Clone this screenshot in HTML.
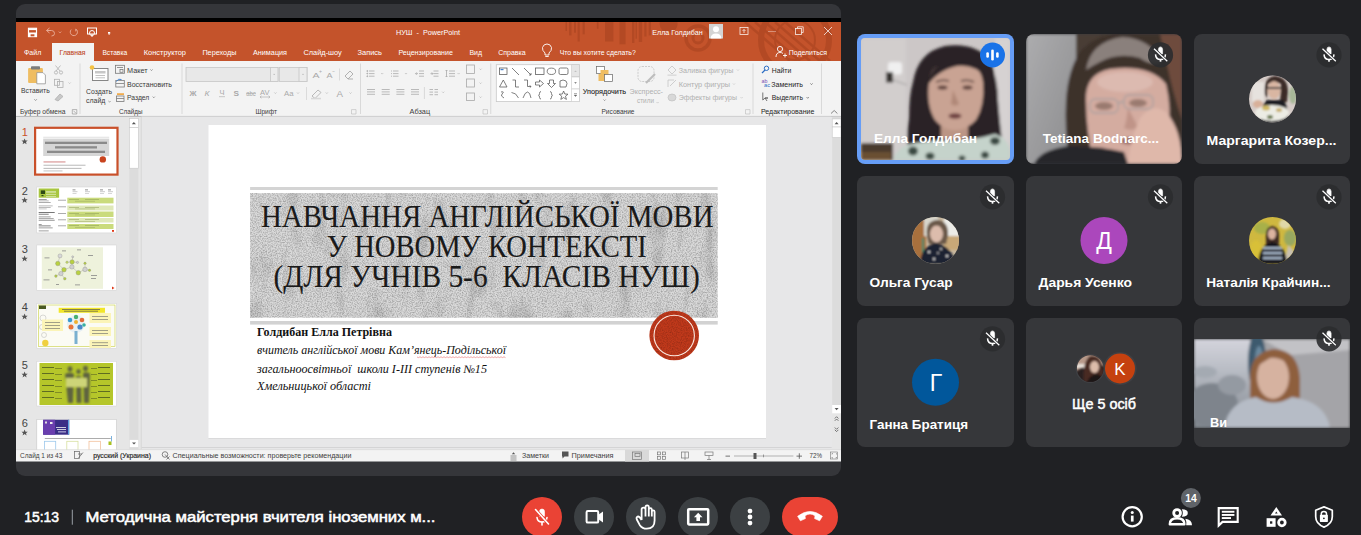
<!DOCTYPE html>
<html><head><meta charset="utf-8"><title>Meet</title>
<style>html,body{margin:0;padding:0;width:1361px;height:535px;overflow:hidden;background:#202124;font-family:"Liberation Sans",sans-serif}svg{display:block}</style></head><body>
<svg width="1361" height="535" viewBox="0 0 1361 535">
<defs><clipPath id="shc"><rect x="16" y="4" width="825" height="472" rx="9"/></clipPath><filter id="noise2" x="0" y="0" width="100%" height="100%"><feTurbulence type="fractalNoise" baseFrequency="0.06 0.02" numOctaves="3" seed="7"/><feColorMatrix type="matrix" values="0 0 0 0 0  0 0 0 0 0  0 0 0 0 0  0 0 0 -2.2 1.05"/><feComposite in2="SourceAlpha" operator="in"/></filter><clipPath id="tbc"><rect x="16" y="22" width="825" height="39"/></clipPath><clipPath id="slc"><rect x="208.5" y="125" width="557.5" height="313"/></clipPath><filter id="noise" x="0" y="0" width="100%" height="100%"><feTurbulence type="fractalNoise" baseFrequency="0.8" numOctaves="2" seed="3"/><feColorMatrix type="matrix" values="0 0 0 0 0  0 0 0 0 0  0 0 0 0 0  0 0 0 -1.6 1.0"/><feComposite in2="SourceAlpha" operator="in"/></filter></defs>
<g clip-path="url(#shc)">
<rect x="16" y="4" width="825" height="472" fill="#35363a" rx="0" />
<rect x="16" y="18" width="825" height="4" fill="#000" rx="0" />
<rect x="16" y="22" width="825" height="39" fill="#c4532b" rx="0" />
<g opacity="0.28" fill="#8a3414" clip-path="url(#tbc)">
<rect x="565.5" y="22" width="1.5" height="9"/>
<rect x="569" y="22" width="2.5" height="13.399999999999999"/>
<rect x="574" y="22" width="2" height="10.700000000000003"/>
<rect x="577.6" y="22" width="2.199999999999932" height="19.5"/>
<rect x="582.6" y="22" width="2.199999999999932" height="12.299999999999997"/>
<rect x="596.9" y="22" width="1.6000000000000227" height="6.800000000000001"/>
<rect x="605" y="22" width="8.399999999999977" height="19.5"/>
<rect x="619.5" y="22" width="6.100000000000023" height="22.299999999999997"/>
<rect x="632" y="22" width="2.3999999999999773" height="21"/>
<rect x="635.5" y="22" width="1.5" height="16.700000000000003"/>
<rect x="638.8" y="22" width="3.300000000000068" height="20"/>
<rect x="644.3" y="22" width="2.2000000000000455" height="14.5"/>
<rect x="648.7" y="22" width="2.2999999999999545" height="13.399999999999999"/>
<circle cx="668.6" cy="24" r="9"/>
<g fill="none" stroke="#8a3414"><circle cx="698" cy="38" r="5" stroke-width="3"/><circle cx="698" cy="38" r="12" stroke-width="3.5"/><circle cx="795" cy="40" r="34" stroke-width="6"/><circle cx="795" cy="40" r="20" stroke-width="2"/></g>
<line x1="745" y1="22" x2="790" y2="61" stroke="#8a3414" stroke-width="2.5"/>
<line x1="755" y1="22" x2="800" y2="61" stroke="#8a3414" stroke-width="2.5"/>
<line x1="765" y1="22" x2="810" y2="61" stroke="#8a3414" stroke-width="2.5"/>
<line x1="775" y1="22" x2="820" y2="61" stroke="#8a3414" stroke-width="2.5"/>
<line x1="785" y1="22" x2="830" y2="61" stroke="#8a3414" stroke-width="2.5"/>
</g>
<rect x="52" y="43" width="42" height="18" fill="#f3f3f3" rx="0" />
<g stroke="#fff" fill="none" stroke-width="1.1"><rect x="28.5" y="28.3" width="8" height="8.3" stroke-width="1.2"/><line x1="28.5" y1="33" x2="36.5" y2="33" stroke-width="1.2"/><rect x="29" y="28.5" width="7" height="1.6" fill="#fff" stroke="none"/><rect x="29" y="33" width="7" height="3.2" fill="#fff" stroke="none"/><rect x="30.6" y="34.3" width="3.8" height="2" fill="#c4532b" stroke="none"/></g>
<g stroke="#e8a993" fill="none" stroke-width="1"><path d="M46.5 30.5 L49.5 28 M46.5 30.5 L49.5 33 M46.5 30.5 H51.5 Q54.5 30.5 54.5 33.5 Q54.5 36 51.5 36"/><path d="M58.7 31.5 L60 33 L61.3 31.5" stroke-width="0.7"/><path d="M75.8 29 A3.6 3.6 0 1 1 71.2 29.6 M75.8 29 V31.4"/></g>
<g stroke="#fff" fill="none" stroke-width="1"><rect x="87.5" y="28" width="9" height="6"/><circle cx="92" cy="33" r="2.5"/><line x1="92" y1="34" x2="92" y2="37"/></g>
<rect x="108" y="32" width="2.2" height="1.5" fill="#fff" rx="0" />
<path d="M107.8 33.5 L110.4 33.5 L109.1 35 Z" fill="#fff"/>
<text xml:space="preserve" x="396" y="34.8" font-size="7.6" fill="#fff" font-weight="normal" font-style="normal" font-family="Liberation Sans" text-anchor="start" textLength="64" lengthAdjust="spacingAndGlyphs" >НУШ  -  PowerPoint</text>
<text xml:space="preserve" x="652.3" y="34.8" font-size="7.6" fill="#fff" font-weight="normal" font-style="normal" font-family="Liberation Sans" text-anchor="start" textLength="50.3" lengthAdjust="spacingAndGlyphs" >Елла Голдибан</text>
<rect x="709" y="24" width="14" height="14.5" fill="#d4d4d4" rx="0" />
<circle cx="716" cy="29.3" r="3" fill="#fff"/><path d="M710.5 38.5 Q711 33.5 716 33.5 Q721 33.5 721.5 38.5 Z" fill="#fff"/>
<g stroke="#fff" fill="none" stroke-width="0.8" opacity="0.9"><rect x="740" y="27.5" width="8" height="7"/><path d="M744 33 V29.5 M742.5 31 L744 29.5 L745.5 31"/><line x1="768" y1="31.5" x2="776" y2="31.5" opacity="0.5"/><rect x="795.5" y="28.5" width="6" height="6"/><path d="M797.5 28.5 V26.8 H803.2 V32.5 H801.5"/><path d="M824 27 L832 35 M832 27 L824 35"/></g>
<text xml:space="preserve" x="24" y="54.8" font-size="7.6" fill="#fff" font-weight="normal" font-style="normal" font-family="Liberation Sans" text-anchor="start" textLength="17.3" lengthAdjust="spacingAndGlyphs" >Файл</text>
<text xml:space="preserve" x="102.4" y="54.8" font-size="7.6" fill="#fff" font-weight="normal" font-style="normal" font-family="Liberation Sans" text-anchor="start" textLength="24.8" lengthAdjust="spacingAndGlyphs" >Вставка</text>
<text xml:space="preserve" x="143.8" y="54.8" font-size="7.6" fill="#fff" font-weight="normal" font-style="normal" font-family="Liberation Sans" text-anchor="start" textLength="42.2" lengthAdjust="spacingAndGlyphs" >Конструктор</text>
<text xml:space="preserve" x="202.4" y="54.8" font-size="7.6" fill="#fff" font-weight="normal" font-style="normal" font-family="Liberation Sans" text-anchor="start" textLength="34" lengthAdjust="spacingAndGlyphs" >Переходы</text>
<text xml:space="preserve" x="253" y="54.8" font-size="7.6" fill="#fff" font-weight="normal" font-style="normal" font-family="Liberation Sans" text-anchor="start" textLength="34" lengthAdjust="spacingAndGlyphs" >Анимация</text>
<text xml:space="preserve" x="303.4" y="54.8" font-size="7.6" fill="#fff" font-weight="normal" font-style="normal" font-family="Liberation Sans" text-anchor="start" textLength="38.4" lengthAdjust="spacingAndGlyphs" >Слайд-шоу</text>
<text xml:space="preserve" x="357.5" y="54.8" font-size="7.6" fill="#fff" font-weight="normal" font-style="normal" font-family="Liberation Sans" text-anchor="start" textLength="24.5" lengthAdjust="spacingAndGlyphs" >Запись</text>
<text xml:space="preserve" x="398.4" y="54.8" font-size="7.6" fill="#fff" font-weight="normal" font-style="normal" font-family="Liberation Sans" text-anchor="start" textLength="54.5" lengthAdjust="spacingAndGlyphs" >Рецензирование</text>
<text xml:space="preserve" x="469.4" y="54.8" font-size="7.6" fill="#fff" font-weight="normal" font-style="normal" font-family="Liberation Sans" text-anchor="start" textLength="12.6" lengthAdjust="spacingAndGlyphs" >Вид</text>
<text xml:space="preserve" x="498.2" y="54.8" font-size="7.6" fill="#fff" font-weight="normal" font-style="normal" font-family="Liberation Sans" text-anchor="start" textLength="27.5" lengthAdjust="spacingAndGlyphs" >Справка</text>
<text xml:space="preserve" x="559.7" y="54.8" font-size="7.6" fill="#fff" font-weight="normal" font-style="normal" font-family="Liberation Sans" text-anchor="start" textLength="76.1" lengthAdjust="spacingAndGlyphs" >Что вы хотите сделать?</text>
<text xml:space="preserve" x="788.7" y="54.8" font-size="7.6" fill="#fff" font-weight="normal" font-style="normal" font-family="Liberation Sans" text-anchor="start" textLength="38.3" lengthAdjust="spacingAndGlyphs" >Поделиться</text>
<text xml:space="preserve" x="59.6" y="54.8" font-size="7.6" fill="#c0461f" font-weight="normal" font-style="normal" font-family="Liberation Sans" text-anchor="start" textLength="25.8" lengthAdjust="spacingAndGlyphs" stroke="#c0461f" stroke-width="0.12">Главная</text>
<g stroke="#fff" fill="none" stroke-width="0.9"><path d="M545 53 Q542 50.5 542.5 47.5 Q543.5 44 547 44 Q550.5 44 551.5 47.5 Q552 50.5 549 53 V55 H545 Z"/><line x1="545.3" y1="56.5" x2="548.7" y2="56.5"/></g>
<g stroke="#fff" fill="none" stroke-width="0.9"><circle cx="780" cy="49" r="2.6"/><path d="M776 57 Q776 52.5 780 52.5 Q782 52.5 783 53.5 M783 55.5 H787 M785 53.5 V57.5"/></g>
<rect x="16" y="61" width="825" height="55" fill="#f3f3f3" rx="0" />
<rect x="16" y="115.5" width="825" height="1" fill="#e9e9e9" rx="0" />
<rect x="79.6" y="63.5" width="0.8" height="50.5" fill="#d2d2d2" rx="0" />
<rect x="181.6" y="63.5" width="0.8" height="50.5" fill="#d2d2d2" rx="0" />
<rect x="360" y="63.5" width="0.8" height="50.5" fill="#d2d2d2" rx="0" />
<rect x="490.4" y="63.5" width="0.8" height="50.5" fill="#d2d2d2" rx="0" />
<rect x="752.6" y="63.5" width="0.8" height="50.5" fill="#d2d2d2" rx="0" />
<rect x="821" y="63.5" width="0.8" height="50.5" fill="#d2d2d2" rx="0" />
<rect x="28.1" y="67.9" width="14.8" height="15.1" fill="#efbd62" rx="1" />
<rect x="31" y="66.2" width="9" height="3.3" fill="#7c7c7c" rx="0.8" />
<path d="M36.8 72.6 H43 L45.4 75 V83.8 H36.8 Z" fill="#fff" stroke="#8a8a8a" stroke-width="0.7"/>
<text xml:space="preserve" x="21" y="92.8" font-size="7.3" fill="#3b3b3b" font-weight="normal" font-style="normal" font-family="Liberation Sans" text-anchor="start" textLength="28.7" lengthAdjust="spacingAndGlyphs" >Вставить</text>
<path d="M34.3 99.2 L35.6 100.5 L36.9 99.2" stroke="#666" fill="none" stroke-width="0.6"/>
<g stroke="#b0b0b0" fill="none" stroke-width="0.8"><circle cx="56" cy="72.5" r="1.6"/><circle cx="61" cy="72.5" r="1.6"/><path d="M55.5 65.5 L60 71 M60.5 65.5 L56 71"/><rect x="54.5" y="79.3" width="5" height="6"/><rect x="57.5" y="81.5" width="5.5" height="6"/><path d="M55 99.5 L60 94 L63 96.5 L58 101 Z" fill="#c8c8c8"/><path d="M68.5 82.5 L69.6 83.6 L70.7 82.5" stroke-width="0.6"/></g>
<text xml:space="preserve" x="19.9" y="113.9" font-size="7.3" fill="#3b3b3b" font-weight="normal" font-style="normal" font-family="Liberation Sans" text-anchor="start" textLength="45.5" lengthAdjust="spacingAndGlyphs" >Буфер обмена</text>
<path d="M72.3 109.6 H76.8 V114 H72.3 Z M73.5 110.8 L76 113.3" stroke="#8a8a8a" fill="none" stroke-width="0.6"/>
<g><rect x="92.5" y="68.5" width="15.5" height="12" fill="#fff" stroke="#7a7a7a" stroke-width="0.9"/><rect x="95" y="71" width="10.5" height="2.5" fill="#c8c8c8"/><line x1="95.5" y1="75.5" x2="105" y2="75.5" stroke="#999" stroke-width="0.6"/><line x1="95.5" y1="77.8" x2="105" y2="77.8" stroke="#999" stroke-width="0.6"/><circle cx="92" cy="67.5" r="2.3" fill="#f5c242"/></g>
<text xml:space="preserve" x="86" y="93.5" font-size="7.3" fill="#3b3b3b" font-weight="normal" font-style="normal" font-family="Liberation Sans" text-anchor="start" textLength="26" lengthAdjust="spacingAndGlyphs" >Создать</text>
<text xml:space="preserve" x="86" y="103.3" font-size="7.3" fill="#3b3b3b" font-weight="normal" font-style="normal" font-family="Liberation Sans" text-anchor="start" textLength="19.4" lengthAdjust="spacingAndGlyphs" >слайд</text>
<path d="M108.4 101 L109.5 102.1 L110.6 101" stroke="#666" fill="none" stroke-width="0.6"/>
<g fill="none" stroke="#7a7a7a" stroke-width="0.8"><rect x="115.5" y="65.3" width="9" height="8"/><line x1="117" y1="67.5" x2="123" y2="67.5"/><rect x="120" y="69.5" width="3" height="2.8"/><rect x="115.8" y="80.5" width="8.5" height="6.5"/><line x1="116" y1="83.5" x2="124" y2="83.5"/><rect x="116.5" y="96" width="7.5" height="5.5"/><line x1="116.5" y1="98.5" x2="124" y2="98.5"/></g>
<path d="M116.5 81.5 Q118 78 121.5 79.5" stroke="#3f7fce" fill="none" stroke-width="1"/>
<rect x="117" y="93.3" width="7" height="1.6" fill="#f0a33a" rx="0" />
<text xml:space="preserve" x="127" y="72.6" font-size="7.3" fill="#3b3b3b" font-weight="normal" font-style="normal" font-family="Liberation Sans" text-anchor="start" textLength="20.6" lengthAdjust="spacingAndGlyphs" >Макет</text>
<text xml:space="preserve" x="127" y="86.6" font-size="7.3" fill="#3b3b3b" font-weight="normal" font-style="normal" font-family="Liberation Sans" text-anchor="start" textLength="45" lengthAdjust="spacingAndGlyphs" >Восстановить</text>
<text xml:space="preserve" x="127" y="99.8" font-size="7.3" fill="#3b3b3b" font-weight="normal" font-style="normal" font-family="Liberation Sans" text-anchor="start" textLength="22.3" lengthAdjust="spacingAndGlyphs" >Раздел</text>
<path d="M150.4 69.4 L151.5 70.6 L152.6 69.4" stroke="#666" fill="none" stroke-width="0.6"/>
<path d="M152.70000000000002 96.60000000000001 L153.8 97.8 L154.9 96.60000000000001" stroke="#666" fill="none" stroke-width="0.6"/>
<text xml:space="preserve" x="119" y="114.1" font-size="7.3" fill="#3b3b3b" font-weight="normal" font-style="normal" font-family="Liberation Sans" text-anchor="start" textLength="23.5" lengthAdjust="spacingAndGlyphs" >Слайды</text>
<rect x="186" y="67.5" width="92" height="14" fill="#e8e8e8" rx="0" stroke="#c6c6c6" stroke-width="0.8"/>
<rect x="270.5" y="67.5" width="7.5" height="14" fill="#ececec" rx="0" stroke="#c6c6c6" stroke-width="0.8"/>
<rect x="279.3" y="67.5" width="27.7" height="14" fill="#e8e8e8" rx="0" stroke="#c6c6c6" stroke-width="0.8"/>
<rect x="299" y="67.5" width="8" height="14" fill="#ececec" rx="0" stroke="#c6c6c6" stroke-width="0.8"/>
<path d="M273.5 74.4 H274.9" stroke="#999" stroke-width="0.6"/>
<path d="M302.3 74.4 H303.7" stroke="#999" stroke-width="0.6"/>
<text xml:space="preserve" x="312.5" y="78" font-size="8" fill="#a9a9a9" font-weight="normal" font-style="normal" font-family="Liberation Sans" text-anchor="start" textLength="7" lengthAdjust="spacingAndGlyphs" >A</text>
<text xml:space="preserve" x="319" y="72.5" font-size="4.5" fill="#a9a9a9" font-weight="normal" font-style="normal" font-family="Liberation Sans" text-anchor="start" textLength="3" lengthAdjust="spacingAndGlyphs" >+</text>
<text xml:space="preserve" x="326.5" y="78" font-size="6.8" fill="#a9a9a9" font-weight="normal" font-style="normal" font-family="Liberation Sans" text-anchor="start" textLength="6" lengthAdjust="spacingAndGlyphs" >A</text>
<text xml:space="preserve" x="332" y="72.5" font-size="4.5" fill="#a9a9a9" font-weight="normal" font-style="normal" font-family="Liberation Sans" text-anchor="start" textLength="3" lengthAdjust="spacingAndGlyphs" >-</text>
<rect x="339" y="68.5" width="0.7" height="12" fill="#d0d0d0" rx="0" />
<path d="M345 76 L350 71 L353 74 L348 79 Z M348 79 H353" stroke="#a9a9a9" fill="none" stroke-width="0.9"/>
<text xml:space="preserve" x="189.5" y="95.5" font-size="7.5" fill="#a9a9a9" font-weight="bold" font-style="normal" font-family="Liberation Sans" text-anchor="start" textLength="7" lengthAdjust="spacingAndGlyphs" >Ж</text>
<text xml:space="preserve" x="204.5" y="95.5" font-size="7.5" fill="#a9a9a9" font-weight="normal" font-style="italic" font-family="Liberation Sans" text-anchor="start" textLength="5" lengthAdjust="spacingAndGlyphs" >К</text>
<text xml:space="preserve" x="219.5" y="95.2" font-size="7.5" fill="#a9a9a9" font-weight="normal" font-style="normal" font-family="Liberation Sans" text-anchor="start" textLength="5" lengthAdjust="spacingAndGlyphs" >Ч</text>
<rect x="219" y="96.5" width="6" height="0.6" fill="#a9a9a9" rx="0" />
<text xml:space="preserve" x="233.5" y="96" font-size="8" fill="#a9a9a9" font-weight="bold" font-style="normal" font-family="Liberation Sans" text-anchor="start" textLength="5.5" lengthAdjust="spacingAndGlyphs" >S</text>
<text xml:space="preserve" x="246.2" y="95.5" font-size="6.5" fill="#a9a9a9" font-weight="normal" font-style="normal" font-family="Liberation Sans" text-anchor="start" textLength="9.5" lengthAdjust="spacingAndGlyphs" >abc</text>
<rect x="246" y="93" width="10" height="0.6" fill="#a9a9a9" rx="0" />
<text xml:space="preserve" x="260" y="94.5" font-size="6.5" fill="#a9a9a9" font-weight="normal" font-style="normal" font-family="Liberation Sans" text-anchor="start" textLength="9.5" lengthAdjust="spacingAndGlyphs" >AV</text>
<path d="M260 97 H270 M261.5 95.8 L260 97 L261.5 98.2 M268.5 95.8 L270 97 L268.5 98.2" stroke="#a9a9a9" fill="none" stroke-width="0.6"/>
<text xml:space="preserve" x="284" y="95.5" font-size="7.5" fill="#a9a9a9" font-weight="normal" font-style="normal" font-family="Liberation Sans" text-anchor="start" textLength="9.5" lengthAdjust="spacingAndGlyphs" >Aa</text>
<rect x="306.2" y="87" width="0.7" height="13" fill="#d0d0d0" rx="0" />
<path d="M312 96 L318 90 L321 92.5 L315 98.5 Z" stroke="#a9a9a9" fill="none" stroke-width="0.8"/>
<rect x="311" y="97.8" width="10" height="1.5" fill="#d8d8d8" rx="0" />
<text xml:space="preserve" x="336.5" y="96.5" font-size="8.5" fill="#a9a9a9" font-weight="normal" font-style="normal" font-family="Liberation Sans" text-anchor="start" textLength="6.5" lengthAdjust="spacingAndGlyphs" >A</text>
<path d="M274.4 92.5 L275.4 93.5 L276.4 92.5" stroke="#aaa" fill="none" stroke-width="0.6"/>
<path d="M297 92.5 L298 93.5 L299 92.5" stroke="#aaa" fill="none" stroke-width="0.6"/>
<path d="M325.8 92.5 L326.8 93.5 L327.8 92.5" stroke="#aaa" fill="none" stroke-width="0.6"/>
<path d="M349.5 92.5 L350.5 93.5 L351.5 92.5" stroke="#aaa" fill="none" stroke-width="0.6"/>
<text xml:space="preserve" x="255.5" y="113.9" font-size="7.3" fill="#3b3b3b" font-weight="normal" font-style="normal" font-family="Liberation Sans" text-anchor="start" textLength="21.5" lengthAdjust="spacingAndGlyphs" >Шрифт</text>
<path d="M351.5 109.6 H356 V114 H351.5 Z" stroke="#bbb" fill="none" stroke-width="0.6"/>
<g stroke="#a9a9a9" fill="none" stroke-width="0.8">
<line x1="369" y1="71.0" x2="374.5" y2="71.0"/>
<line x1="369" y1="73.6" x2="374.5" y2="73.6"/>
<line x1="369" y1="76.2" x2="374.5" y2="76.2"/>
<line x1="393" y1="71.0" x2="398.5" y2="71.0"/>
<line x1="393" y1="73.6" x2="398.5" y2="73.6"/>
<line x1="393" y1="76.2" x2="398.5" y2="76.2"/>
<circle cx="367.3" cy="71.0" r="0.5" fill="#a9a9a9"/>
<line x1="391" y1="71.0" x2="392" y2="71.0"/>
<circle cx="367.3" cy="73.6" r="0.5" fill="#a9a9a9"/>
<line x1="391" y1="73.6" x2="392" y2="73.6"/>
<circle cx="367.3" cy="76.2" r="0.5" fill="#a9a9a9"/>
<line x1="391" y1="76.2" x2="392" y2="76.2"/>
<line x1="419" y1="71.0" x2="424" y2="71.0"/>
<line x1="419" y1="73.6" x2="424" y2="73.6"/>
<line x1="419" y1="76.2" x2="424" y2="76.2"/>
<path d="M418 73.6 L415.5 73.6 M416.7 72.4 L415.5 73.6 L416.7 74.8"/>
<line x1="433.5" y1="71.0" x2="438.5" y2="71.0"/>
<line x1="433.5" y1="73.6" x2="438.5" y2="73.6"/>
<line x1="433.5" y1="76.2" x2="438.5" y2="76.2"/>
<path d="M430.5 73.6 L433 73.6 M431.8 72.4 L433 73.6 L431.8 74.8"/>
<line x1="449" y1="71.0" x2="455" y2="71.0"/>
<line x1="449" y1="73.6" x2="455" y2="73.6"/>
<line x1="449" y1="76.2" x2="455" y2="76.2"/>
<path d="M446.5 70 V77 M445.5 71 L446.5 70 L447.5 71 M445.5 76 L446.5 77 L447.5 76"/>
<path d="M381.2 73.1 L382.2 74.1 L383.2 73.1" stroke-width="0.6"/>
<path d="M405 73.1 L406 74.1 L407 73.1" stroke-width="0.6"/>
<path d="M457.6 73.1 L458.6 74.1 L459.6 73.1" stroke-width="0.6"/>
<path d="M442.2 91.7 L443.2 92.7 L444.2 91.7" stroke-width="0.6"/>
<path d="M479.6 68.7 L480.6 69.7 L481.6 68.7" stroke-width="0.6"/>
<path d="M479.6 82.6 L480.6 83.6 L481.6 82.6" stroke-width="0.6"/>
<path d="M479.6 96.6 L480.6 97.6 L481.6 96.6" stroke-width="0.6"/>
<line x1="367" y1="89.5" x2="375" y2="89.5"/>
<line x1="367" y1="91.9" x2="375" y2="91.9"/>
<line x1="367" y1="94.3" x2="375" y2="94.3"/>
<line x1="381.7" y1="89.5" x2="389.7" y2="89.5"/>
<line x1="381.7" y1="91.9" x2="389.7" y2="91.9"/>
<line x1="381.7" y1="94.3" x2="389.7" y2="94.3"/>
<line x1="396.4" y1="89.5" x2="404.4" y2="89.5"/>
<line x1="396.4" y1="91.9" x2="404.4" y2="91.9"/>
<line x1="396.4" y1="94.3" x2="404.4" y2="94.3"/>
<line x1="411" y1="89.5" x2="419" y2="89.5"/>
<line x1="411" y1="91.9" x2="419" y2="91.9"/>
<line x1="411" y1="94.3" x2="419" y2="94.3"/>
<line x1="424.4" y1="87" x2="424.4" y2="99" stroke="#d0d0d0"/>
<line x1="429.5" y1="89.5" x2="433.0" y2="89.5"/>
<line x1="429.5" y1="92.1" x2="433.0" y2="92.1"/>
<line x1="429.5" y1="94.7" x2="433.0" y2="94.7"/>
<line x1="434.5" y1="89.5" x2="438.0" y2="89.5"/>
<line x1="434.5" y1="92.1" x2="438.0" y2="92.1"/>
<line x1="434.5" y1="94.7" x2="438.0" y2="94.7"/>
<rect x="466.5" y="65" width="8" height="8.5"/><rect x="466.5" y="79" width="8" height="8"/><rect x="466.5" y="93" width="8" height="7.5"/>
</g>
<text xml:space="preserve" x="409.5" y="113.9" font-size="7.3" fill="#3b3b3b" font-weight="normal" font-style="normal" font-family="Liberation Sans" text-anchor="start" textLength="20.6" lengthAdjust="spacingAndGlyphs" >Абзац</text>
<path d="M483 109.6 H487.5 V114 H483 Z" stroke="#bbb" fill="none" stroke-width="0.6"/>
<rect x="496.3" y="64.7" width="83" height="36.9" fill="#fff" rx="0" stroke="#c8c8c8" stroke-width="0.8"/>
<rect x="571.7" y="64.7" width="7.6" height="12" fill="#e6e6e6" rx="0" stroke="#c8c8c8" stroke-width="0.6"/>
<rect x="571.7" y="77" width="7.6" height="12" fill="#fff" rx="0" stroke="#c8c8c8" stroke-width="0.6"/>
<rect x="571.7" y="89" width="7.6" height="12.6" fill="#fff" rx="0" stroke="#c8c8c8" stroke-width="0.6"/>
<path d="M574.2 72 L575.5 70.5 L576.8 72 Z" fill="#c0c0c0"/><path d="M574.2 82.3 L575.5 83.8 L576.8 82.3 Z" fill="#666"/><path d="M574 93.5 H577 M574.2 95 L575.5 96.5 L576.8 95 Z" stroke="#666" fill="#666" stroke-width="0.5"/>
<g stroke="#555" fill="none" stroke-width="0.75">
<rect x="499.5" y="68" width="7.5" height="6.5"/><rect x="500.5" y="69" width="3" height="1.2" fill="#3f7fce" stroke="none"/>
<line x1="512" y1="68" x2="519" y2="75"/><line x1="524" y1="68" x2="531" y2="75"/><path d="M529 75 H531 V73"/>
<rect x="535.5" y="68" width="8.5" height="6.5"/><ellipse cx="551.4" cy="71.3" rx="4.2" ry="3.2"/><rect x="559" y="68" width="9" height="6.5" rx="1.5"/>
<path d="M499.5 87 L503.3 80 L507 87 Z"/><path d="M512.5 80 H515.5 V87 H519"/><path d="M524 80 H527.5 V86.5 H531 M529.8 85.3 L531 86.5 L529.8 87.7"/>
<path d="M535.5 82 H539.5 V80 L543.5 83.5 L539.5 87 V85 H535.5 Z"/><path d="M549.5 80 H553.5 V83.5 H555.5 L551.5 87.5 L547.5 83.5 H549.5 Z"/><path d="M560 87 V81 Q563 79 566 81 Q568 83 566 87 Z"/>
<path d="M501 92 Q505 91 502 94 Q500 96 504 98"/><path d="M511.5 92.5 Q516 92.5 518.5 98"/><path d="M523 98 Q525 92 527.5 92 Q530 92 531 98"/>
<path d="M541 91.5 Q539.5 91.5 539.5 93.5 Q539.5 95.3 538.5 95.3 Q539.5 95.3 539.5 97.3 Q539.5 99 541 99"/><path d="M550 91.5 Q551.5 91.5 551.5 93.5 Q551.5 95.3 552.5 95.3 Q551.5 95.3 551.5 97.3 Q551.5 99 550 99"/>
<path d="M563.6 91 L564.8 94 L568 94.2 L565.5 96.2 L566.4 99.4 L563.6 97.6 L560.8 99.4 L561.7 96.2 L559.2 94.2 L562.4 94 Z"/>
</g>
<rect x="596.5" y="66.5" width="8" height="7" fill="#fff" rx="0" stroke="#666" stroke-width="0.7"/>
<rect x="600.5" y="70" width="8" height="7" fill="#efbd62" rx="0" />
<rect x="598.5" y="74" width="8" height="7" fill="#efbd62" rx="0" />
<rect x="604.5" y="74.5" width="8" height="7" fill="#fff" rx="0" stroke="#666" stroke-width="0.7"/>
<text xml:space="preserve" x="582.8" y="93.5" font-size="7.3" fill="#1e1e1e" font-weight="normal" font-style="normal" font-family="Liberation Sans" text-anchor="start" textLength="43.2" lengthAdjust="spacingAndGlyphs" stroke="#1e1e1e" stroke-width="0.1">Упорядочить</text>
<path d="M603.5 99.5 L604.6 100.6 L605.7 99.5" stroke="#666" fill="none" stroke-width="0.6"/>
<rect x="638" y="66.5" width="16" height="15" rx="4" stroke="#c8c8c8" fill="none" stroke-width="0.9" stroke-dasharray="2 1"/>
<path d="M646 83 L655 74" stroke="#bdbdbd" stroke-width="2.2"/>
<text xml:space="preserve" x="629.6" y="93.5" font-size="7.3" fill="#b0b0b0" font-weight="normal" font-style="normal" font-family="Liberation Sans" text-anchor="start" textLength="33.4" lengthAdjust="spacingAndGlyphs" >Экспресс-</text>
<text xml:space="preserve" x="637" y="103.3" font-size="7.3" fill="#b0b0b0" font-weight="normal" font-style="normal" font-family="Liberation Sans" text-anchor="start" textLength="17" lengthAdjust="spacingAndGlyphs" >стили</text>
<path d="M656.5 102 L657.6 103.1 L658.7 102" stroke="#bbb" fill="none" stroke-width="0.6"/>
<g stroke="#c4c4c4" fill="none" stroke-width="0.8"><path d="M668 70 L672 66 L676 70 L672 74 Z"/><rect x="667.5" y="74.5" width="9" height="1.3" fill="#d8d8d8" stroke="none"/><path d="M668 87 V80 H674 M670 86 L676 80"/><ellipse cx="672" cy="97.5" rx="4" ry="3.5" fill="#d8d8d8"/></g>
<text xml:space="preserve" x="678.7" y="72.6" font-size="7.3" fill="#b0b0b0" font-weight="normal" font-style="normal" font-family="Liberation Sans" text-anchor="start" textLength="54.6" lengthAdjust="spacingAndGlyphs" >Заливка фигуры</text>
<text xml:space="preserve" x="678.7" y="86.6" font-size="7.3" fill="#b0b0b0" font-weight="normal" font-style="normal" font-family="Liberation Sans" text-anchor="start" textLength="51.3" lengthAdjust="spacingAndGlyphs" >Контур фигуры</text>
<text xml:space="preserve" x="678.7" y="100.3" font-size="7.3" fill="#b0b0b0" font-weight="normal" font-style="normal" font-family="Liberation Sans" text-anchor="start" textLength="58.3" lengthAdjust="spacingAndGlyphs" >Эффекты фигуры</text>
<path d="M737 69.5 L738 70.5 L739 69.5" stroke="#bbb" fill="none" stroke-width="0.6"/>
<path d="M733 83.5 L734 84.5 L735 83.5" stroke="#bbb" fill="none" stroke-width="0.6"/>
<path d="M740.6 97.2 L741.6 98.2 L742.6 97.2" stroke="#bbb" fill="none" stroke-width="0.6"/>
<text xml:space="preserve" x="601.5" y="113.9" font-size="7.3" fill="#3b3b3b" font-weight="normal" font-style="normal" font-family="Liberation Sans" text-anchor="start" textLength="33" lengthAdjust="spacingAndGlyphs" >Рисование</text>
<path d="M745.5 109.6 H750 V114 H745.5 Z" stroke="#bbb" fill="none" stroke-width="0.6"/>
<circle cx="766.5" cy="68.3" r="2.2" stroke="#2a6cc4" fill="none" stroke-width="1"/><line x1="765" y1="70" x2="762" y2="73" stroke="#2a6cc4" stroke-width="1.2"/>
<text xml:space="preserve" x="771.8" y="72.6" font-size="7.3" fill="#262626" font-weight="normal" font-style="normal" font-family="Liberation Sans" text-anchor="start" textLength="19.5" lengthAdjust="spacingAndGlyphs" >Найти</text>
<text xml:space="preserve" x="761.5" y="82.5" font-size="4.5" fill="#7a4fb5" font-weight="normal" font-style="normal" font-family="Liberation Sans" text-anchor="start" textLength="6" lengthAdjust="spacingAndGlyphs" >ab</text>
<text xml:space="preserve" x="764" y="87" font-size="4.5" fill="#2a6cc4" font-weight="normal" font-style="normal" font-family="Liberation Sans" text-anchor="start" textLength="6" lengthAdjust="spacingAndGlyphs" >ac</text>
<text xml:space="preserve" x="771.3" y="86.6" font-size="7.3" fill="#262626" font-weight="normal" font-style="normal" font-family="Liberation Sans" text-anchor="start" textLength="31.7" lengthAdjust="spacingAndGlyphs" >Заменить</text>
<path d="M762.8 92.5 V100 L765 98 L767 101 M765 98 H768 Z" stroke="#555" fill="none" stroke-width="0.8"/>
<text xml:space="preserve" x="771.8" y="100.3" font-size="7.3" fill="#262626" font-weight="normal" font-style="normal" font-family="Liberation Sans" text-anchor="start" textLength="31.2" lengthAdjust="spacingAndGlyphs" >Выделить</text>
<path d="M810.4 83.4 L811.5 84.6 L812.6 83.4" stroke="#444" fill="none" stroke-width="0.6"/>
<path d="M806.6 97.10000000000001 L807.7 98.3 L808.8000000000001 97.10000000000001" stroke="#444" fill="none" stroke-width="0.6"/>
<text xml:space="preserve" x="761" y="113.9" font-size="7.3" fill="#262626" font-weight="normal" font-style="normal" font-family="Liberation Sans" text-anchor="start" textLength="53.3" lengthAdjust="spacingAndGlyphs" >Редактирование</text>
<path d="M831 113.5 L834.2 110.5 L837.4 113.5" stroke="#666" fill="none" stroke-width="0.8"/>
<rect x="16" y="116.5" width="825" height="333.5" fill="#e6e6e6" rx="0" />
<rect x="129.3" y="118.5" width="9.1" height="331" fill="#dcdcdc" rx="0" />
<rect x="129.3" y="118.5" width="9.1" height="9.1" fill="#fff" rx="0" stroke="#c8c8c8" stroke-width="0.6"/>
<path d="M131.8 124.2 L133.85 122 L135.9 124.2 Z" fill="#555"/>
<rect x="129.3" y="127.6" width="9.1" height="40.6" fill="#fff" rx="0" stroke="#c8c8c8" stroke-width="0.6"/>
<rect x="129.8" y="439.9" width="8.4" height="7.2" fill="#fff" rx="0" />
<path d="M132 442.6 L134 444.6 L136 442.6 Z" fill="#555"/>
<rect x="140.8" y="116.5" width="0.9" height="333" fill="#cfcfcf" rx="0" />
<rect x="141.7" y="116.5" width="690" height="333" fill="#e7e7e8" rx="0" />
<rect x="141.7" y="447.2" width="690" height="0.8" fill="#d0d0d0" rx="0" />
<rect x="832.2" y="116.5" width="8.8" height="288.5" fill="#dcdcdc" rx="0" />
<rect x="832.2" y="118.9" width="8.8" height="8.1" fill="#fff" rx="0" stroke="#c8c8c8" stroke-width="0.6"/>
<path d="M834.6 124.2 L836.6 122 L838.6 124.2 Z" fill="#555"/>
<rect x="832.2" y="127" width="8.8" height="10.5" fill="#fff" rx="0" stroke="#c8c8c8" stroke-width="0.6"/>
<rect x="832.2" y="405" width="8.8" height="8.3" fill="#fff" rx="0" />
<path d="M834.6 408 L836.6 410.2 L838.6 408 Z" fill="#555"/>
<g stroke="#555" fill="none" stroke-width="0.8"><path d="M834.8 418.5 L836.6 416.7 L838.4 418.5 M834.8 420.8 L836.6 419 L838.4 420.8"/><path d="M834.8 427.5 L836.6 429.3 L838.4 427.5 M834.8 429.8 L836.6 431.6 L838.4 429.8"/></g>
<text xml:space="preserve" x="24.8" y="135.9" font-size="11" fill="#c9502a" font-weight="normal" font-style="normal" font-family="Liberation Sans" text-anchor="middle" >1</text>
<path d="M24.6 138.4 L25.5 140.5 L27.7 140.6 L26 142.0 L26.6 144.20000000000002 L24.6 142.9 L22.6 144.20000000000002 L23.2 142.0 L21.5 140.6 L23.7 140.5 Z" fill="#555"/>
<text xml:space="preserve" x="24.8" y="194.6" font-size="11" fill="#444" font-weight="normal" font-style="normal" font-family="Liberation Sans" text-anchor="middle" >2</text>
<path d="M24.6 197.1 L25.5 199.2 L27.7 199.29999999999998 L26 200.7 L26.6 202.9 L24.6 201.6 L22.6 202.9 L23.2 200.7 L21.5 199.29999999999998 L23.7 199.2 Z" fill="#555"/>
<text xml:space="preserve" x="24.8" y="253.1" font-size="11" fill="#444" font-weight="normal" font-style="normal" font-family="Liberation Sans" text-anchor="middle" >3</text>
<path d="M24.6 255.60000000000002 L25.5 257.70000000000005 L27.7 257.8 L26 259.20000000000005 L26.6 261.40000000000003 L24.6 260.1 L22.6 261.40000000000003 L23.2 259.20000000000005 L21.5 257.8 L23.7 257.70000000000005 Z" fill="#555"/>
<text xml:space="preserve" x="24.8" y="311.1" font-size="11" fill="#444" font-weight="normal" font-style="normal" font-family="Liberation Sans" text-anchor="middle" >4</text>
<path d="M24.6 313.6 L25.5 315.70000000000005 L27.7 315.8 L26 317.20000000000005 L26.6 319.40000000000003 L24.6 318.1 L22.6 319.40000000000003 L23.2 317.20000000000005 L21.5 315.8 L23.7 315.70000000000005 Z" fill="#555"/>
<text xml:space="preserve" x="24.8" y="369.1" font-size="11" fill="#444" font-weight="normal" font-style="normal" font-family="Liberation Sans" text-anchor="middle" >5</text>
<path d="M24.6 371.6 L25.5 373.70000000000005 L27.7 373.8 L26 375.20000000000005 L26.6 377.40000000000003 L24.6 376.1 L22.6 377.40000000000003 L23.2 375.20000000000005 L21.5 373.8 L23.7 373.70000000000005 Z" fill="#555"/>
<text xml:space="preserve" x="24.8" y="427.1" font-size="11" fill="#444" font-weight="normal" font-style="normal" font-family="Liberation Sans" text-anchor="middle" >6</text>
<path d="M24.6 429.6 L25.5 431.70000000000005 L27.7 431.8 L26 433.20000000000005 L26.6 435.40000000000003 L24.6 434.1 L22.6 435.40000000000003 L23.2 433.20000000000005 L21.5 431.8 L23.7 431.70000000000005 Z" fill="#555"/>
<rect x="34" y="126.7" width="84.6" height="49" fill="#c9502a" rx="0" />
<rect x="36.2" y="128.9" width="80.2" height="44.6" fill="#fff" rx="0" />
<rect x="43.2" y="138.6" width="66" height="17.4" fill="#d6d6d6" rx="0" />
<rect x="43.2" y="136.8" width="66" height="0.8" fill="#d8d8d8" rx="0" />
<rect x="45" y="141.7" width="62" height="2.3" fill="#8a8a8a" rx="0" />
<rect x="55" y="146.2" width="42" height="2.3" fill="#8a8a8a" rx="0" />
<rect x="47" y="150.7" width="58" height="2.3" fill="#8a8a8a" rx="0" />
<circle cx="102.8" cy="159.4" r="3.2" fill="#c8441e"/>
<rect x="43.5" y="161.5" width="22" height="0.9" fill="#c77" rx="0" />
<rect x="43.5" y="164.8" width="42" height="0.7" fill="#999" rx="0" />
<rect x="43.5" y="167.9" width="38" height="0.7" fill="#999" rx="0" />
<rect x="43.5" y="170.6" width="19" height="0.7" fill="#aaa" rx="0" />
<rect x="36.8" y="187" width="79.7" height="45.9" fill="#fff" rx="0" stroke="#d0d0d0" stroke-width="0.5"/>
<rect x="38.7" y="188.5" width="20.4" height="9.2" fill="#a8c640" rx="0" />
<rect x="40.8" y="190.4" width="4.2" height="3.6" fill="#2e4a14" rx="0" />
<rect x="41.5" y="195" width="2" height="1.2" fill="#2e4a14" rx="0" />
<rect x="46" y="191" width="10" height="0.6" fill="#e8f0d0" rx="0" />
<rect x="46" y="192.5" width="10" height="0.6" fill="#e8f0d0" rx="0" />
<rect x="46" y="194" width="10" height="0.6" fill="#e8f0d0" rx="0" />
<rect x="46" y="196" width="10" height="0.6" fill="#e8f0d0" rx="0" />
<rect x="67.3" y="197.7" width="46.2" height="5.7" fill="#cadb7c" rx="0" />
<rect x="69" y="199.2" width="10" height="0.5" fill="#8a9a50" rx="0" />
<rect x="85" y="199.2" width="14" height="0.5" fill="#8a9a50" rx="0" />
<rect x="75" y="200.89999999999998" width="20" height="0.5" fill="#9aa860" rx="0" />
<rect x="67.3" y="205.5" width="46.2" height="5" fill="#dfe8b8" rx="0" />
<rect x="69" y="207.0" width="10" height="0.5" fill="#8a9a50" rx="0" />
<rect x="85" y="207.0" width="14" height="0.5" fill="#8a9a50" rx="0" />
<rect x="75" y="208.7" width="20" height="0.5" fill="#9aa860" rx="0" />
<rect x="67.3" y="211.5" width="46.2" height="5.5" fill="#cadb7c" rx="0" />
<rect x="69" y="213.0" width="10" height="0.5" fill="#8a9a50" rx="0" />
<rect x="85" y="213.0" width="14" height="0.5" fill="#8a9a50" rx="0" />
<rect x="75" y="214.7" width="20" height="0.5" fill="#9aa860" rx="0" />
<rect x="67.3" y="218" width="46.2" height="4.5" fill="#dfe8b8" rx="0" />
<rect x="69" y="219.5" width="10" height="0.5" fill="#8a9a50" rx="0" />
<rect x="85" y="219.5" width="14" height="0.5" fill="#8a9a50" rx="0" />
<rect x="75" y="221.2" width="20" height="0.5" fill="#9aa860" rx="0" />
<rect x="67.3" y="224" width="46.2" height="5" fill="#cadb7c" rx="0" />
<rect x="69" y="225.5" width="10" height="0.5" fill="#8a9a50" rx="0" />
<rect x="85" y="225.5" width="14" height="0.5" fill="#8a9a50" rx="0" />
<rect x="75" y="227.2" width="20" height="0.5" fill="#9aa860" rx="0" />
<rect x="38.7" y="199" width="8" height="0.8" fill="#888" rx="0" />
<rect x="38.7" y="200.5" width="10" height="0.8" fill="#aaa" rx="0" />
<rect x="38.7" y="202" width="12" height="0.8" fill="#999" rx="0" />
<rect x="38.7" y="205.5" width="14" height="0.8" fill="#aaa" rx="0" />
<rect x="38.7" y="207" width="12" height="0.8" fill="#aaa" rx="0" />
<rect x="38.7" y="208.5" width="8" height="0.8" fill="#bbb" rx="0" />
<rect x="38.7" y="212" width="16" height="0.8" fill="#555" rx="0" />
<rect x="38.7" y="213.8" width="10" height="0.8" fill="#666" rx="0" />
<rect x="38.7" y="216.5" width="12" height="0.8" fill="#888" rx="0" />
<rect x="38.7" y="218" width="15" height="0.8" fill="#999" rx="0" />
<rect x="38.7" y="219.8" width="16" height="0.8" fill="#777" rx="0" />
<rect x="38.7" y="224" width="3" height="0.8" fill="#888" rx="0" />
<rect x="38.7" y="225.5" width="12" height="0.8" fill="#666" rx="0" />
<rect x="38.7" y="227.5" width="14" height="0.8" fill="#888" rx="0" />
<rect x="38.7" y="230.5" width="10" height="0.8" fill="#888" rx="0" />
<rect x="58" y="199.8" width="8" height="0.7" fill="#888" rx="0" />
<rect x="58" y="206.5" width="8" height="0.7" fill="#888" rx="0" />
<rect x="58" y="213" width="8" height="0.7" fill="#888" rx="0" />
<rect x="58" y="219.5" width="8" height="0.7" fill="#888" rx="0" />
<rect x="58" y="225.5" width="8" height="0.7" fill="#888" rx="0" />
<rect x="72.5" y="189.5" width="3" height="0.8" fill="#777" rx="0" />
<rect x="72.5" y="191.5" width="5" height="0.6" fill="#aaa" rx="0" />
<rect x="72.5" y="193" width="4" height="0.6" fill="#bbb" rx="0" />
<rect x="85" y="189.5" width="3" height="0.8" fill="#777" rx="0" />
<rect x="85" y="191.5" width="5" height="0.6" fill="#aaa" rx="0" />
<rect x="85" y="193" width="4" height="0.6" fill="#bbb" rx="0" />
<rect x="100" y="189.5" width="3" height="0.8" fill="#777" rx="0" />
<rect x="100" y="191.5" width="5" height="0.6" fill="#aaa" rx="0" />
<rect x="100" y="193" width="4" height="0.6" fill="#bbb" rx="0" />
<rect x="108" y="189.5" width="3" height="0.8" fill="#777" rx="0" />
<rect x="108" y="191.5" width="5" height="0.6" fill="#aaa" rx="0" />
<rect x="108" y="193" width="4" height="0.6" fill="#bbb" rx="0" />
<rect x="112" y="230" width="2" height="1.8" fill="#e03a1a" rx="0" />
<rect x="36.8" y="245" width="79.7" height="45.3" fill="#fff" rx="0" stroke="#d0d0d0" stroke-width="0.5"/>
<rect x="41.8" y="247.3" width="61.2" height="41.5" fill="#eef2dc" rx="0" />
<line x1="60" y1="255.9" x2="57.8" y2="263.5" stroke="#b8b8b0" stroke-width="0.6"/>
<line x1="57.8" y1="263.5" x2="64" y2="269.7" stroke="#b8b8b0" stroke-width="0.6"/>
<line x1="64" y1="269.7" x2="60.9" y2="273.6" stroke="#b8b8b0" stroke-width="0.6"/>
<line x1="60.9" y1="273.6" x2="55.9" y2="276.1" stroke="#b8b8b0" stroke-width="0.6"/>
<line x1="60.9" y1="273.6" x2="64.8" y2="278.7" stroke="#b8b8b0" stroke-width="0.6"/>
<line x1="64" y1="269.7" x2="71.9" y2="266.9" stroke="#b8b8b0" stroke-width="0.6"/>
<line x1="71.9" y1="266.9" x2="72.1" y2="261.9" stroke="#b8b8b0" stroke-width="0.6"/>
<line x1="72.1" y1="261.9" x2="67" y2="262.2" stroke="#b8b8b0" stroke-width="0.6"/>
<line x1="72.1" y1="261.9" x2="72.7" y2="256.8" stroke="#b8b8b0" stroke-width="0.6"/>
<line x1="72.1" y1="261.9" x2="77.5" y2="262.4" stroke="#b8b8b0" stroke-width="0.6"/>
<line x1="71.9" y1="266.9" x2="78.3" y2="272.7" stroke="#b8b8b0" stroke-width="0.6"/>
<line x1="78.3" y1="272.7" x2="85" y2="269.4" stroke="#b8b8b0" stroke-width="0.6"/>
<line x1="85" y1="269.4" x2="85" y2="263.3" stroke="#b8b8b0" stroke-width="0.6"/>
<line x1="85" y1="269.4" x2="89.5" y2="270.3" stroke="#b8b8b0" stroke-width="0.6"/>
<circle cx="60" cy="255.9" r="2" fill="#d8d8d8" stroke="#888" stroke-width="0.35"/>
<circle cx="57.8" cy="263.5" r="2.3" fill="#b8d040" stroke="#888" stroke-width="0.35"/>
<circle cx="64" cy="269.7" r="2.3" fill="#b8d040" stroke="#888" stroke-width="0.35"/>
<circle cx="60.9" cy="273.6" r="2.2" fill="#d0d0d0" stroke="#888" stroke-width="0.35"/>
<circle cx="55.9" cy="276.1" r="1.3" fill="#b8d040" stroke="#888" stroke-width="0.35"/>
<circle cx="64.8" cy="278.7" r="1.3" fill="#b8d040" stroke="#888" stroke-width="0.35"/>
<circle cx="71.9" cy="266.9" r="2.2" fill="#d0d0d0" stroke="#888" stroke-width="0.35"/>
<circle cx="72.1" cy="261.9" r="2.2" fill="#b8d040" stroke="#888" stroke-width="0.35"/>
<circle cx="67" cy="262.2" r="1.2" fill="#c8e060" stroke="#888" stroke-width="0.35"/>
<circle cx="72.7" cy="256.8" r="1" fill="#d0d0d0" stroke="#888" stroke-width="0.35"/>
<circle cx="77.5" cy="262.4" r="1.1" fill="#d0d0d0" stroke="#888" stroke-width="0.35"/>
<circle cx="78.3" cy="272.7" r="2.3" fill="#b8d040" stroke="#888" stroke-width="0.35"/>
<circle cx="85" cy="269.4" r="2.3" fill="#d0d0d0" stroke="#888" stroke-width="0.35"/>
<circle cx="85" cy="263.3" r="1.2" fill="#b8d040" stroke="#888" stroke-width="0.35"/>
<circle cx="89.5" cy="270.3" r="1.2" fill="#b8d040" stroke="#888" stroke-width="0.35"/>
<rect x="62" y="250.5" width="4" height="0.8" fill="#888" rx="0" />
<rect x="77" y="249.5" width="4" height="0.8" fill="#888" rx="0" />
<rect x="44.5" y="257.5" width="5" height="0.8" fill="#888" rx="0" />
<rect x="48" y="269.5" width="4" height="0.8" fill="#888" rx="0" />
<rect x="43.5" y="279.5" width="6" height="0.8" fill="#888" rx="0" />
<rect x="56" y="284" width="3" height="0.8" fill="#888" rx="0" />
<rect x="75" y="284.5" width="5" height="0.8" fill="#888" rx="0" />
<rect x="88" y="255" width="5" height="0.8" fill="#888" rx="0" />
<rect x="91" y="275" width="6" height="0.8" fill="#888" rx="0" />
<rect x="91" y="278" width="5" height="0.8" fill="#888" rx="0" />
<path d="M112 286.5 L114.5 288 L112 289.5 Z" fill="#e03a1a"/>
<rect x="36.8" y="303.4" width="79.7" height="44.8" fill="#fff" rx="0" stroke="#d0d0d0" stroke-width="0.5"/>
<rect x="38.3" y="305" width="76.7" height="41.6" fill="#fbfbf4" rx="0" stroke="#c8d040" stroke-width="0.6"/>
<rect x="39" y="305.5" width="7" height="3.5" fill="#4a5a20" rx="0" />
<g opacity="0.6"><circle cx="43" cy="318" r="3" fill="none" stroke="#999" stroke-width="0.6"/><circle cx="42" cy="327" r="2.5" fill="none" stroke="#999" stroke-width="0.6"/><circle cx="44" cy="335" r="2.5" fill="none" stroke="#999" stroke-width="0.6"/></g>
<rect x="58.7" y="307.8" width="46.3" height="5" fill="#f2e62a" rx="0" />
<rect x="62" y="309" width="38" height="0.7" fill="#555" rx="0" />
<rect x="64" y="310.8" width="34" height="0.7" fill="#555" rx="0" />
<circle cx="76" cy="324" r="9" fill="#e8f0f4"/><circle cx="70" cy="320" r="2.3" fill="#3a9ad0"/><circle cx="76" cy="317" r="2.2" fill="#4ab070"/><circle cx="82" cy="320" r="2.3" fill="#e06a3a"/><circle cx="71" cy="327" r="2.5" fill="#e8743a"/><circle cx="80" cy="327" r="2.6" fill="#4a88c8"/><circle cx="76" cy="322" r="2" fill="#f0b030"/><circle cx="84" cy="325" r="1.8" fill="#3ab0a0"/>
<rect x="74.5" y="331" width="3" height="13" fill="#7ab0d0" rx="0" />
<rect x="42" y="319.5" width="21" height="11.5" fill="#fbf4b8" rx="0" />
<rect x="89.5" y="313" width="21.5" height="10" fill="#fbf4b8" rx="0" />
<rect x="89.5" y="327" width="21.5" height="9" fill="#fbf4b8" rx="0" />
<rect x="89.5" y="340" width="21.5" height="8" fill="#fbf4b8" rx="0" />
<rect x="45" y="322" width="15" height="0.6" fill="#666" rx="0" />
<rect x="45" y="325" width="15" height="0.6" fill="#666" rx="0" />
<rect x="45" y="328" width="15" height="0.6" fill="#666" rx="0" />
<rect x="92" y="316" width="16" height="0.6" fill="#666" rx="0" />
<rect x="92" y="319" width="16" height="0.6" fill="#666" rx="0" />
<rect x="92" y="330" width="16" height="0.6" fill="#666" rx="0" />
<rect x="92" y="333" width="16" height="0.6" fill="#666" rx="0" />
<rect x="92" y="342.5" width="16" height="0.6" fill="#666" rx="0" />
<rect x="92" y="345" width="16" height="0.6" fill="#666" rx="0" />
<circle cx="45.3" cy="343" r="3.2" fill="#f0d040"/>
<rect x="36.8" y="361.3" width="79.7" height="44.7" fill="#fff" rx="0" stroke="#d0d0d0" stroke-width="0.5"/>
<rect x="39.5" y="363" width="73.5" height="42" fill="#b5c62a" rx="0" />
<g filter="url(#bl05)"><g fill="#5e6440"><ellipse cx="70" cy="369" rx="2.4" ry="2.8"/><ellipse cx="78.5" cy="371.5" rx="2.2" ry="2.6"/><ellipse cx="85.5" cy="368.5" rx="2.4" ry="2.8"/><path d="M65 374 Q70 371.5 74 374 L73 403 H68 Z"/><path d="M76 376 H81 L81.5 403 H76.5 Z"/><path d="M83 373 Q86 371.5 90 373.5 L89 403 H84 Z"/></g><rect x="66" y="378" width="21" height="9" fill="#cdd478"/></g>
<rect x="42" y="367" width="12" height="0.8" fill="#4a5520" rx="0" />
<rect x="55" y="368" width="7" height="0.5" fill="#4a5520" rx="0" />
<rect x="98" y="367" width="12" height="0.8" fill="#4a5520" rx="0" />
<rect x="91" y="368" width="6" height="0.5" fill="#4a5520" rx="0" />
<rect x="42" y="373" width="12" height="0.8" fill="#4a5520" rx="0" />
<rect x="55" y="374" width="7" height="0.5" fill="#4a5520" rx="0" />
<rect x="98" y="373" width="12" height="0.8" fill="#4a5520" rx="0" />
<rect x="91" y="374" width="6" height="0.5" fill="#4a5520" rx="0" />
<rect x="42" y="379" width="12" height="0.8" fill="#4a5520" rx="0" />
<rect x="55" y="380" width="7" height="0.5" fill="#4a5520" rx="0" />
<rect x="98" y="379" width="12" height="0.8" fill="#4a5520" rx="0" />
<rect x="91" y="380" width="6" height="0.5" fill="#4a5520" rx="0" />
<rect x="42" y="385" width="12" height="0.8" fill="#4a5520" rx="0" />
<rect x="55" y="386" width="7" height="0.5" fill="#4a5520" rx="0" />
<rect x="98" y="385" width="12" height="0.8" fill="#4a5520" rx="0" />
<rect x="91" y="386" width="6" height="0.5" fill="#4a5520" rx="0" />
<rect x="42" y="391" width="12" height="0.8" fill="#4a5520" rx="0" />
<rect x="55" y="392" width="7" height="0.5" fill="#4a5520" rx="0" />
<rect x="98" y="391" width="12" height="0.8" fill="#4a5520" rx="0" />
<rect x="91" y="392" width="6" height="0.5" fill="#4a5520" rx="0" />
<rect x="42" y="397" width="12" height="0.8" fill="#4a5520" rx="0" />
<rect x="55" y="398" width="7" height="0.5" fill="#4a5520" rx="0" />
<rect x="98" y="397" width="12" height="0.8" fill="#4a5520" rx="0" />
<rect x="91" y="398" width="6" height="0.5" fill="#4a5520" rx="0" />
<rect x="36.8" y="419.3" width="79.7" height="31" fill="#fff" rx="0" stroke="#c8c8c8" stroke-width="0.6"/>
<rect x="43.1" y="419.8" width="26.1" height="14.9" fill="#3a2e86" rx="0" />
<rect x="43.1" y="419.8" width="12" height="14.9" fill="#6a3eae" rx="0" />
<rect x="68" y="419.8" width="1.2" height="14.9" fill="#5aa0e0" rx="0" />
<rect x="45" y="421.5" width="2" height="2" fill="#ddd" rx="0" />
<rect x="50" y="422" width="2.5" height="2" fill="#eee" rx="0" />
<rect x="56" y="427" width="10" height="1" fill="#ccd" rx="0" />
<rect x="57" y="429" width="9" height="1" fill="#ccd" rx="0" />
<rect x="58" y="431.5" width="8" height="0.8" fill="#eef" rx="0" />
<rect x="44.8" y="438.2" width="66" height="0.7" fill="#888" rx="0" />
<rect x="111.2" y="436" width="0.8" height="5.5" fill="#5aa0d8" rx="0" />
<rect x="108.5" y="441.5" width="3" height="3.5" fill="#a8c020" rx="0" />
<rect x="44.5" y="441.3" width="11.2" height="9" fill="#fff" rx="0" stroke="#9cc8ec" stroke-width="0.8"/>
<rect x="66.8" y="441.3" width="11.2" height="9" fill="#fff" rx="0" stroke="#d8e0a0" stroke-width="0.8"/>
<rect x="89" y="441.3" width="11.5" height="9" fill="#fff" rx="0" stroke="#f2c09c" stroke-width="0.8"/>
<rect x="208.5" y="125" width="557.5" height="313" fill="#fff" rx="0" />
<rect x="208.5" y="438" width="557.5" height="0.8" fill="#d8d8d8" rx="0" />
<rect x="250.1" y="187" width="467.6" height="3" fill="#d4d4d4" rx="0" />
<rect x="250.1" y="193.1" width="467.6" height="124.6" fill="#d9d9d9" rx="0" />
<rect x="250.1" y="193.1" width="467.6" height="124.6" fill="#f2f2f2" rx="0" filter="url(#noise)" opacity="0.35"/>
<rect x="250.1" y="193.1" width="467.6" height="124.6" fill="#c4c4c4" rx="0" filter="url(#noise2)" opacity="0.18"/>
<rect x="250.1" y="321" width="467.6" height="3.6" fill="#d2d2d2" rx="0" />
<text xml:space="preserve" x="261" y="227" font-size="30.5" fill="#1a1a1a" font-weight="normal" font-style="normal" font-family="Liberation Serif" text-anchor="start" textLength="452.5" lengthAdjust="spacingAndGlyphs" stroke="#1a1a1a" stroke-width="0.1">НАВЧАННЯ АНГЛІЙСЬКОЇ МОВИ</text>
<text xml:space="preserve" x="326.8" y="257.4" font-size="30.5" fill="#1a1a1a" font-weight="normal" font-style="normal" font-family="Liberation Serif" text-anchor="start" textLength="320" lengthAdjust="spacingAndGlyphs" stroke="#1a1a1a" stroke-width="0.1">У НОВОМУ КОНТЕКСТІ</text>
<text xml:space="preserve" x="273.5" y="286.8" font-size="30.5" fill="#1a1a1a" font-weight="normal" font-style="normal" font-family="Liberation Serif" text-anchor="start" textLength="426.3" lengthAdjust="spacingAndGlyphs" stroke="#1a1a1a" stroke-width="0.1">(ДЛЯ УЧНІВ 5-6  КЛАСІВ НУШ)</text>
<text xml:space="preserve" x="257" y="336.3" font-size="11.6" fill="#111" font-weight="bold" font-style="normal" font-family="Liberation Serif" text-anchor="start" textLength="134.9" lengthAdjust="spacingAndGlyphs" >Голдибан Елла Петрівна</text>
<text xml:space="preserve" x="257" y="354" font-size="11.6" fill="#111" font-weight="normal" font-style="italic" font-family="Liberation Serif" text-anchor="start" textLength="249" lengthAdjust="spacingAndGlyphs" >вчитель англійської мови Кам’янець-Подільської</text>
<text xml:space="preserve" x="257" y="372.6" font-size="11.6" fill="#111" font-weight="normal" font-style="italic" font-family="Liberation Serif" text-anchor="start" textLength="230" lengthAdjust="spacingAndGlyphs" >загальноосвітньої  школи І-ІІІ ступенів №15</text>
<text xml:space="preserve" x="257" y="390.4" font-size="11.6" fill="#111" font-weight="normal" font-style="italic" font-family="Liberation Serif" text-anchor="start" textLength="114" lengthAdjust="spacingAndGlyphs" >Хмельницької області</text>
<path d="M417 357 L418.5 357.6 L420.0 356.8 L421.5 357.6 L423.0 356.8 L424.5 357.6 L426.0 356.8 L427.5 357.6 L429.0 356.8 L430.5 357.6 L432.0 356.8 L433.5 357.6 L435.0 356.8 L436.5 357.6 L438.0 356.8 L439.5 357.6 L441.0 356.8 L442.5 357.6 L444.0 356.8 L445.5 357.6 L447.0 356.8 L448.5 357.6 L450.0 356.8 L451.5 357.6 L453.0 356.8 L454.5 357.6 L456.0 356.8 L457.5 357.6 L459.0 356.8 L460.5 357.6 L462.0 356.8 L463.5 357.6 L465.0 356.8 L466.5 357.6 L468.0 356.8 L469.5 357.6 L471.0 356.8 L472.5 357.6 L474.0 356.8 L475.5 357.6 L477.0 356.8 L478.5 357.6 L480.0 356.8 L481.5 357.6 L483.0 356.8 L484.5 357.6 L486.0 356.8 L487.5 357.6 L489.0 356.8 L490.5 357.6 L492.0 356.8 L493.5 357.6 L495.0 356.8 L496.5 357.6 L498.0 356.8 L499.5 357.6 L501.0 356.8 L502.5 357.6 L504.0 356.8 L505.5 357.6" stroke="#e05050" fill="none" stroke-width="0.5"/>
<circle cx="674.2" cy="335.5" r="24.8" fill="#c0391b"/>
<circle cx="674.2" cy="335.5" r="24.8" fill="#e88060" filter="url(#noise)" opacity="0.25"/>
<circle cx="674.2" cy="335.5" r="20.2" fill="none" stroke="#fbe9e0" stroke-width="1.1"/>
<rect x="16" y="449.8" width="825" height="11.7" fill="#f3f3f3" rx="0" />
<rect x="16" y="449.5" width="825" height="0.6" fill="#d6d6d6" rx="0" />
<text xml:space="preserve" x="20.1" y="458" font-size="6.6" fill="#404040" font-weight="normal" font-style="normal" font-family="Liberation Sans" text-anchor="start" textLength="42.2" lengthAdjust="spacingAndGlyphs" >Слайд 1 из 43</text>
<g stroke="#666" fill="none" stroke-width="0.7"><rect x="74.5" y="451.5" width="5" height="7"/><path d="M78.5 458 L83 452.5 M78 454 H82"/></g>
<text xml:space="preserve" x="93.2" y="458.3" font-size="6.6" fill="#262626" font-weight="normal" font-style="normal" font-family="Liberation Sans" text-anchor="start" textLength="57.8" lengthAdjust="spacingAndGlyphs" stroke="#262626" stroke-width="0.15">русский (Украина)</text>
<g stroke="#555" fill="none" stroke-width="0.7"><circle cx="165" cy="454.5" r="2.8"/><path d="M165 454.5 L169.5 459.5 M166.5 459.5 L169.5 456.5"/></g>
<text xml:space="preserve" x="172.6" y="458" font-size="6.6" fill="#404040" font-weight="normal" font-style="normal" font-family="Liberation Sans" text-anchor="start" textLength="178.8" lengthAdjust="spacingAndGlyphs" >Специальные возможности: проверьте рекомендации</text>
<g stroke="#555" fill="none" stroke-width="0.6"><path d="M510.5 456 H516.5 M510.5 458 H516.5 M510.5 460 H516.5"/></g><path d="M511.8 454.3 L513.5 452.3 L515.2 454.3 Z" fill="#555"/>
<text xml:space="preserve" x="522" y="458" font-size="6.6" fill="#404040" font-weight="normal" font-style="normal" font-family="Liberation Sans" text-anchor="start" textLength="27" lengthAdjust="spacingAndGlyphs" >Заметки</text>
<path d="M562 451.5 H568.5 V456.5 H564.5 L562.5 458.5 V456.5 H562 Z" fill="#555"/>
<text xml:space="preserve" x="571.6" y="458" font-size="6.6" fill="#404040" font-weight="normal" font-style="normal" font-family="Liberation Sans" text-anchor="start" textLength="41.9" lengthAdjust="spacingAndGlyphs" >Примечания</text>
<rect x="625" y="449.8" width="24" height="11.7" fill="#d9d9d9" rx="0" />
<g stroke="#777" fill="none" stroke-width="0.7"><rect x="632.5" y="452" width="9" height="7.5"/><rect x="635" y="453.5" width="5" height="3"/><rect x="657.5" y="452" width="3" height="2.8"/><rect x="662.5" y="452" width="3" height="2.8"/><rect x="657.5" y="456.5" width="3" height="2.8"/><rect x="662.5" y="456.5" width="3" height="2.8"/><rect x="681.5" y="452" width="7" height="6"/><line x1="685" y1="452" x2="685" y2="460"/><rect x="705" y="452" width="8" height="3.5"/><path d="M709 455.5 V459.5 M707 459.5 H711"/></g>
<rect x="725.5" y="455.7" width="4.5" height="0.8" fill="#555" rx="0" />
<rect x="734" y="455.7" width="59.4" height="0.6" fill="#888" rx="0" />
<rect x="753.5" y="453" width="3" height="6" fill="#555" rx="0" />
<rect x="763" y="454.5" width="0.6" height="2.8" fill="#666" rx="0" />
<rect x="796.5" y="455.7" width="5.5" height="0.8" fill="#555" rx="0" />
<rect x="798.85" y="453.3" width="0.8" height="5.5" fill="#555" rx="0" />
<text xml:space="preserve" x="809.6" y="458" font-size="6.6" fill="#404040" font-weight="normal" font-style="normal" font-family="Liberation Sans" text-anchor="start" textLength="12.4" lengthAdjust="spacingAndGlyphs" >72%</text>
<g stroke="#777" fill="none" stroke-width="0.6"><rect x="830.5" y="452" width="7" height="7"/><path d="M832 454.5 V453.5 H833 M836 453.5 H836.5 V454.5 M836.5 457 V458 H835.5 M833 458 H832 V457"/></g>
</g>
<defs><filter id="bl1"><feGaussianBlur stdDeviation="1.6"/></filter><filter id="bl2"><feGaussianBlur stdDeviation="3"/></filter><filter id="bl05"><feGaussianBlur stdDeviation="0.8"/></filter><clipPath id="t1"><rect x="861" y="38" width="149" height="122" rx="4"/></clipPath><clipPath id="t2"><rect x="1026" y="34" width="156" height="130" rx="8"/></clipPath><clipPath id="t9"><rect x="1194" y="339" width="156" height="89"/></clipPath><clipPath id="av1"><circle cx="1272.5" cy="99" r="23.5"/></clipPath><clipPath id="av2"><circle cx="935.5" cy="240.5" r="23.5"/></clipPath><clipPath id="av3"><circle cx="1272.5" cy="240.5" r="23.5"/></clipPath><clipPath id="av4"><circle cx="1090.2" cy="368.5" r="13.3"/></clipPath></defs>
<rect x="857" y="34" width="157" height="130" fill="#36373a" rx="8" />
<rect x="1026" y="34" width="156" height="130" fill="#36373a" rx="8" />
<rect x="1194" y="34" width="156" height="130" fill="#36373a" rx="8" />
<rect x="857" y="176" width="157" height="130" fill="#36373a" rx="8" />
<rect x="1026" y="176" width="156" height="130" fill="#36373a" rx="8" />
<rect x="1194" y="176" width="156" height="130" fill="#36373a" rx="8" />
<rect x="857" y="318" width="157" height="129" fill="#36373a" rx="8" />
<rect x="1026" y="318" width="156" height="129" fill="#36373a" rx="8" />
<rect x="1194" y="318" width="156" height="129" fill="#36373a" rx="8" />
<rect x="857" y="34" width="157" height="130" fill="#669df6" rx="8" />
<g clip-path="url(#t1)">
<rect x="861" y="38" width="149" height="122" fill="#ccc7c7" rx="0" />
<g filter="url(#bl1)">
<rect x="861" y="38" width="45" height="122" fill="#d2cecd" rx="0" />
<rect x="995" y="38" width="15" height="122" fill="#d6d2d2" rx="0" />
<rect x="888" y="62" width="14" height="12.5" fill="#f0f0f0" rx="3" />
<rect x="886" y="72" width="7" height="10.5" fill="#35302e" rx="0" />
<path d="M893 80 L907 85" stroke="#8a8a8a" stroke-width="0.8"/>
<path d="M913 82 Q918 52 945 46 Q975 42 990 60 Q998 80 998 100 Q1000 125 1002 140 L1000 160 L910 160 Q905 140 909 118 Q909 95 913 82 Z" fill="#292426"/>
<rect x="941" y="122" width="27" height="17" fill="#bb9585" rx="0" />
<path d="M929 82 Q931 62 955 60 Q980 61 983 82 Q985 105 976 120 Q967 130 955 130 Q943 130 935 120 Q926 105 929 82 Z" fill="#c9a393"/>
<path d="M927 86 Q933 58 960 56 Q983 57 987 78 Q975 64 957 66 Q938 70 927 86 Z" fill="#292426"/>
<path d="M936 82 Q942 79 949 81" stroke="#4a3430" stroke-width="1.5" fill="none"/><path d="M961 81 Q968 79 974 82" stroke="#4a3430" stroke-width="1.5" fill="none"/>
<ellipse cx="942.5" cy="87.5" rx="5" ry="2" fill="#5a3c38"/><ellipse cx="967.5" cy="87.5" rx="5" ry="2" fill="#5a3c38"/>
<path d="M953 90 L951 104 Q955 107 959 104 Z" fill="#b08878"/>
<ellipse cx="955" cy="116" rx="6.5" ry="2.8" fill="#6e4040"/>
<path d="M893 160 Q897 146 915 143 Q935 140 950 141 Q975 140 995 134 Q1008 138 1010 150 L1010 160 Z" fill="#c5d3cb"/>
<ellipse cx="913" cy="151" rx="5" ry="4.5" fill="#3a4a42"/><ellipse cx="930" cy="156" rx="4.5" ry="3.5" fill="#3a4a42"/><ellipse cx="995" cy="141" rx="5" ry="4" fill="#3a4a42"/><ellipse cx="985" cy="155" rx="4" ry="3.5" fill="#3a4a42"/><ellipse cx="962" cy="158" rx="3.5" ry="2.5" fill="#3a4a42"/>
<rect x="861" y="143" width="32" height="17" fill="#4a3a2e" rx="0" />
<rect x="861" y="152" width="30" height="8" fill="#6a5030" rx="0" />
</g></g>
<circle cx="992.5" cy="55" r="12.5" fill="#1a73e8"/>
<rect x="986.3" y="52.3" width="2.6" height="5.4" fill="#fff" rx="1.3" />
<rect x="991.2" y="49.5" width="2.6" height="11" fill="#fff" rx="1.3" />
<rect x="996.1" y="52.3" width="2.6" height="5.4" fill="#fff" rx="1.3" />
<defs><linearGradient id="wall2" x1="0" y1="0" x2="1" y2="1"><stop offset="0" stop-color="#acacae"/><stop offset="1" stop-color="#8c8c8e"/></linearGradient></defs>
<g clip-path="url(#t2)"><g filter="url(#bl1)">
<rect x="1026" y="34" width="156" height="130" fill="#4a3c36" rx="0" />
<rect x="1026" y="34" width="50" height="130" fill="url(#wall2)"/>
<path d="M1070 164 Q1064 130 1066 100 Q1068 70 1080 52 Q1095 34 1120 34 L1182 34 L1182 164 Z" fill="#3c302c"/>
<path d="M1086 70 Q1090 42 1122 37 Q1150 38 1162 62 Q1150 66 1140 58 Q1118 52 1100 62 Q1092 66 1086 70 Z" fill="#8a807c"/>
<path d="M1160 34 H1182 V120 Q1172 90 1166 60 Z" fill="#6e4c3c"/>
<path d="M1086 100 Q1085 74 1110 69 Q1150 64 1166 84 Q1172 110 1168 132 L1162 164 L1094 164 Q1086 132 1086 100 Z" fill="#d4aca0"/>
<ellipse cx="1125" cy="82" rx="28" ry="10" fill="#dcbab0"/>
<ellipse cx="1104" cy="106" rx="9" ry="4" fill="#9a7a70"/><ellipse cx="1138" cy="103" rx="9" ry="4" fill="#9a7a70"/>
<g fill="none" stroke="#a8a0a0" stroke-width="1.3"><rect x="1090" y="99" width="28" height="14" rx="5"/><rect x="1124" y="95" width="29" height="14" rx="5"/><path d="M1118 104 Q1121 101 1124 102"/></g>
<path d="M1128 108 Q1126 124 1124 128 Q1132 132 1138 127 Z" fill="#c09488"/><ellipse cx="1130" cy="141" rx="10" ry="3.5" fill="#9a6a64"/>
<path d="M1034 164 Q1040 150 1068 146 Q1100 146 1124 152 L1128 164 Z" fill="#26262c"/>
<path d="M1128 164 Q1130 140 1140 118 Q1152 102 1166 112 Q1182 130 1182 164 Z" fill="#dfb8aa"/>
</g></g>
<g clip-path="url(#av1)">
<rect x="1248" y="75" width="50" height="48" fill="#d6ccc8" rx="0" />
<g filter="url(#bl05)"><rect x="1252" y="82" width="12" height="20" fill="#e6e2de"/><ellipse cx="1293" cy="95" rx="4" ry="9" fill="#a8b898"/><path d="M1265 95 Q1263 77 1275 76 Q1288 77 1288 92 L1287 102 L1280 102 L1281 84 Q1274 80 1268 84 L1267 98 Z" fill="#3a2a26"/><ellipse cx="1274" cy="90" rx="6.5" ry="9" fill="#d9b6a2"/><rect x="1267" y="87" width="14" height="2" fill="#444" rx="1"/><path d="M1260 124 Q1261 104 1267 100 L1283 100 Q1288 104 1289 124 Z" fill="#1e1e22"/><ellipse cx="1258" cy="104" rx="5" ry="4" fill="#d8b09a"/><ellipse cx="1272" cy="113" rx="17" ry="8" fill="#ecece4"/><ellipse cx="1266" cy="108" rx="4" ry="2.5" fill="#d0b860"/><ellipse cx="1279" cy="110" rx="3" ry="2" fill="#c8b070"/><ellipse cx="1270" cy="117" rx="3" ry="2" fill="#6a7a50"/></g>
</g>
<g clip-path="url(#av2)">
<rect x="911" y="216" width="50" height="48" fill="#c8b8a0" rx="0" />
<g filter="url(#bl05)"><rect x="911" y="216" width="15" height="48" fill="#a8703e"/><rect x="924" y="216" width="14" height="20" fill="#d8d6cc"/><rect x="944" y="216" width="17" height="30" fill="#ecece8"/><rect x="944" y="236" width="17" height="14" fill="#c8a878"/><rect x="922" y="238" width="2" height="20" fill="#3a8a6a"/><path d="M927 236 Q925 221 937 220 Q949 221 948 236 L946 244 L929 244 Z" fill="#6a5848"/><ellipse cx="936.5" cy="234" rx="6.5" ry="8.5" fill="#dcbcac"/><path d="M920 264 Q921 246 936 243 Q952 246 956 264 Z" fill="#1c2032"/><circle cx="929" cy="252" r="1.3" fill="#d8d8d8"/><circle cx="941" cy="249" r="1.1" fill="#d8d8d8"/><circle cx="947" cy="256" r="1.3" fill="#d8d8d8"/><circle cx="934" cy="259" r="1.2" fill="#d8d8d8"/><circle cx="938" cy="253" r="0.9" fill="#ccc"/></g>
</g>
<g clip-path="url(#av3)">
<rect x="1249" y="217" width="47" height="47" fill="#cfb840" rx="0" />
<g filter="url(#bl05)"><ellipse cx="1262" cy="228" rx="8" ry="6" fill="#a8b048"/><ellipse cx="1290" cy="238" rx="6" ry="8" fill="#98a860"/><ellipse cx="1285" cy="224" rx="6" ry="5" fill="#e0d8a8"/><path d="M1284 264 L1288 245 Q1296 250 1296 264 Z" fill="#c8c0b0"/><ellipse cx="1256" cy="250" rx="6" ry="10" fill="#d8c038"/><path d="M1266 238 Q1265 227 1272 226 Q1280 227 1279 238 L1279 244 L1266 244 Z" fill="#3e2a22"/><ellipse cx="1272" cy="234" rx="4" ry="5.5" fill="#dcb4a0"/><path d="M1258 264 Q1259 245 1272 242 Q1286 245 1287 264 Z" fill="#16161a"/><rect x="1263" y="247" width="19" height="2.3" fill="#a8b8cc"/><rect x="1263" y="252" width="19" height="2.3" fill="#a8b8cc"/><rect x="1263" y="257" width="19" height="2.3" fill="#a8b8cc"/></g>
</g>
<circle cx="1104" cy="240.5" r="23.5" fill="#ab47bc"/>
<text xml:space="preserve" x="1104" y="249.3" font-size="23" fill="#fff" font-weight="normal" font-style="normal" font-family="Liberation Sans" text-anchor="middle" >Д</text>
<circle cx="935.5" cy="382.3" r="23.5" fill="#01579b"/>
<text xml:space="preserve" x="936" y="391" font-size="23" fill="#fff" font-weight="normal" font-style="normal" font-family="Liberation Sans" text-anchor="middle" >Г</text>
<circle cx="1120" cy="368.5" r="16.6" fill="#3f4044"/><circle cx="1090.2" cy="368.5" r="14.6" fill="#3f4044"/>
<g clip-path="url(#av4)">
<rect x="1075" y="353" width="31" height="31" fill="#2a2020" rx="0" />
<g filter="url(#bl05)"><path d="M1075 353 H1106 V366 Q1090 362 1075 372 Z" fill="#b89a8a"/><rect x="1076" y="364" width="12" height="4" fill="#e8e0d8"/><path d="M1084 384 Q1082 362 1090 356 Q1100 354 1102 366 L1106 384 Z" fill="#4a2a22"/><ellipse cx="1094.5" cy="367" rx="4.5" ry="6" fill="#dcbcaa"/><path d="M1086 384 Q1090 374 1097 374 Q1104 376 1106 384 Z" fill="#1a1618"/></g>
</g>
<circle cx="1120" cy="368.5" r="15" fill="#c5410f"/>
<text xml:space="preserve" x="1120" y="374.6" font-size="17" fill="#fff" font-weight="normal" font-style="normal" font-family="Liberation Sans" text-anchor="middle" >K</text>
<defs><linearGradient id="sky" x1="0" y1="0" x2="0" y2="1"><stop offset="0" stop-color="#d4d4dc"/><stop offset="0.35" stop-color="#b8bcc4"/><stop offset="1" stop-color="#80868e"/></linearGradient></defs>
<g clip-path="url(#t9)"><g filter="url(#bl1)">
<rect x="1194" y="339" width="156" height="89" fill="#a4a4a8" rx="0" />
<path d="M1194 339 H1250 L1258 428 H1194 Z" fill="url(#sky)"/>
<ellipse cx="1212" cy="405" rx="26" ry="22" fill="#7e848c"/><ellipse cx="1232" cy="385" rx="14" ry="10" fill="#949aa2"/><ellipse cx="1205" cy="372" rx="12" ry="6" fill="#a4aab2"/>
<ellipse cx="1257" cy="362" rx="9" ry="30" fill="#3e5a6e"/><ellipse cx="1259" cy="366" rx="4.5" ry="20" fill="#6a8aa0"/>
<path d="M1262 339 H1350 V350 L1290 355 Z" fill="#c2c2c6"/>
<path d="M1250 380 Q1249 352 1274 349 Q1298 350 1300 378 L1300 405 L1250 402 Z" fill="#8e5e3e"/>
<ellipse cx="1273" cy="377" rx="16" ry="22" fill="#d6b2a0"/>
<path d="M1257 366 Q1262 352 1276 352 Q1290 353 1292 368 Q1282 356 1270 358 Z" fill="#8e5e3e"/>
<path d="M1224 428 Q1228 402 1256 397 Q1273 408 1292 397 Q1326 402 1330 428 Z" fill="#b6bcc6"/>
</g></g>
<circle cx="1160.5" cy="54.9" r="12.6" fill="#2b2c2f" opacity="0.9"/>
<g fill="none" stroke="#fff" stroke-width="1.5" stroke-linecap="butt"><path d="M1158.4 53.9 V49.4 Q1158.4 46.9 1160.5 46.9 Q1162.6 46.9 1162.6 49.4 V53.9 Z" fill="#fff" stroke-width="0.6"/><path d="M1155.5 54.4 Q1155.8 59.6 1160.5 59.6 Q1165.2 59.6 1165.5 54.4"/><line x1="1160.5" y1="59.6" x2="1160.5" y2="61.699999999999996" stroke-width="1.7"/><line x1="1154.0" y1="48.699999999999996" x2="1167.3" y2="61.199999999999996" stroke="#2b2c2f" stroke-width="2.8"/><line x1="1154.0" y1="48.699999999999996" x2="1167.3" y2="61.199999999999996" stroke-width="1.3"/></g>
<circle cx="1329" cy="54.9" r="12.6" fill="#2b2c2f" opacity="0.9"/>
<g fill="none" stroke="#fff" stroke-width="1.5" stroke-linecap="butt"><path d="M1326.9 53.9 V49.4 Q1326.9 46.9 1329 46.9 Q1331.1 46.9 1331.1 49.4 V53.9 Z" fill="#fff" stroke-width="0.6"/><path d="M1324 54.4 Q1324.3 59.6 1329 59.6 Q1333.7 59.6 1334 54.4"/><line x1="1329" y1="59.6" x2="1329" y2="61.699999999999996" stroke-width="1.7"/><line x1="1322.5" y1="48.699999999999996" x2="1335.8" y2="61.199999999999996" stroke="#2b2c2f" stroke-width="2.8"/><line x1="1322.5" y1="48.699999999999996" x2="1335.8" y2="61.199999999999996" stroke-width="1.3"/></g>
<circle cx="992.5" cy="196.9" r="12.6" fill="#2b2c2f" opacity="0.9"/>
<g fill="none" stroke="#fff" stroke-width="1.5" stroke-linecap="butt"><path d="M990.4 195.9 V191.4 Q990.4 188.9 992.5 188.9 Q994.6 188.9 994.6 191.4 V195.9 Z" fill="#fff" stroke-width="0.6"/><path d="M987.5 196.4 Q987.8 201.6 992.5 201.6 Q997.2 201.6 997.5 196.4"/><line x1="992.5" y1="201.6" x2="992.5" y2="203.70000000000002" stroke-width="1.7"/><line x1="986.0" y1="190.70000000000002" x2="999.3" y2="203.20000000000002" stroke="#2b2c2f" stroke-width="2.8"/><line x1="986.0" y1="190.70000000000002" x2="999.3" y2="203.20000000000002" stroke-width="1.3"/></g>
<circle cx="1160.5" cy="196.9" r="12.6" fill="#2b2c2f" opacity="0.9"/>
<g fill="none" stroke="#fff" stroke-width="1.5" stroke-linecap="butt"><path d="M1158.4 195.9 V191.4 Q1158.4 188.9 1160.5 188.9 Q1162.6 188.9 1162.6 191.4 V195.9 Z" fill="#fff" stroke-width="0.6"/><path d="M1155.5 196.4 Q1155.8 201.6 1160.5 201.6 Q1165.2 201.6 1165.5 196.4"/><line x1="1160.5" y1="201.6" x2="1160.5" y2="203.70000000000002" stroke-width="1.7"/><line x1="1154.0" y1="190.70000000000002" x2="1167.3" y2="203.20000000000002" stroke="#2b2c2f" stroke-width="2.8"/><line x1="1154.0" y1="190.70000000000002" x2="1167.3" y2="203.20000000000002" stroke-width="1.3"/></g>
<circle cx="1329" cy="196.9" r="12.6" fill="#2b2c2f" opacity="0.9"/>
<g fill="none" stroke="#fff" stroke-width="1.5" stroke-linecap="butt"><path d="M1326.9 195.9 V191.4 Q1326.9 188.9 1329 188.9 Q1331.1 188.9 1331.1 191.4 V195.9 Z" fill="#fff" stroke-width="0.6"/><path d="M1324 196.4 Q1324.3 201.6 1329 201.6 Q1333.7 201.6 1334 196.4"/><line x1="1329" y1="201.6" x2="1329" y2="203.70000000000002" stroke-width="1.7"/><line x1="1322.5" y1="190.70000000000002" x2="1335.8" y2="203.20000000000002" stroke="#2b2c2f" stroke-width="2.8"/><line x1="1322.5" y1="190.70000000000002" x2="1335.8" y2="203.20000000000002" stroke-width="1.3"/></g>
<circle cx="992.5" cy="338.9" r="12.6" fill="#2b2c2f" opacity="0.9"/>
<g fill="none" stroke="#fff" stroke-width="1.5" stroke-linecap="butt"><path d="M990.4 337.9 V333.4 Q990.4 330.9 992.5 330.9 Q994.6 330.9 994.6 333.4 V337.9 Z" fill="#fff" stroke-width="0.6"/><path d="M987.5 338.4 Q987.8 343.59999999999997 992.5 343.59999999999997 Q997.2 343.59999999999997 997.5 338.4"/><line x1="992.5" y1="343.59999999999997" x2="992.5" y2="345.7" stroke-width="1.7"/><line x1="986.0" y1="332.7" x2="999.3" y2="345.2" stroke="#2b2c2f" stroke-width="2.8"/><line x1="986.0" y1="332.7" x2="999.3" y2="345.2" stroke-width="1.3"/></g>
<circle cx="1329" cy="338.9" r="12.6" fill="#2b2c2f" opacity="0.9"/>
<g fill="none" stroke="#fff" stroke-width="1.5" stroke-linecap="butt"><path d="M1326.9 337.9 V333.4 Q1326.9 330.9 1329 330.9 Q1331.1 330.9 1331.1 333.4 V337.9 Z" fill="#fff" stroke-width="0.6"/><path d="M1324 338.4 Q1324.3 343.59999999999997 1329 343.59999999999997 Q1333.7 343.59999999999997 1334 338.4"/><line x1="1329" y1="343.59999999999997" x2="1329" y2="345.7" stroke-width="1.7"/><line x1="1322.5" y1="332.7" x2="1335.8" y2="345.2" stroke="#2b2c2f" stroke-width="2.8"/><line x1="1322.5" y1="332.7" x2="1335.8" y2="345.2" stroke-width="1.3"/></g>
<text xml:space="preserve" x="874" y="143.2" font-size="13.5" fill="#fff" font-weight="bold" font-style="normal" font-family="Liberation Sans" text-anchor="start" textLength="103" lengthAdjust="spacingAndGlyphs" >Елла Голдибан</text>
<text xml:space="preserve" x="1042.8" y="143.2" font-size="13.5" fill="#fff" font-weight="bold" font-style="normal" font-family="Liberation Sans" text-anchor="start" textLength="116.2" lengthAdjust="spacingAndGlyphs" >Tetiana Bodnarc...</text>
<text xml:space="preserve" x="1206.5" y="145" font-size="13.5" fill="#fff" font-weight="bold" font-style="normal" font-family="Liberation Sans" text-anchor="start" textLength="130" lengthAdjust="spacingAndGlyphs" >Маргарита Козер...</text>
<text xml:space="preserve" x="869.4" y="286.9" font-size="13.5" fill="#fff" font-weight="bold" font-style="normal" font-family="Liberation Sans" text-anchor="start" textLength="83.4" lengthAdjust="spacingAndGlyphs" >Ольга Гусар</text>
<text xml:space="preserve" x="1038.5" y="286.9" font-size="13.5" fill="#fff" font-weight="bold" font-style="normal" font-family="Liberation Sans" text-anchor="start" textLength="93.5" lengthAdjust="spacingAndGlyphs" >Дарья Усенко</text>
<text xml:space="preserve" x="1206.2" y="286.9" font-size="13.5" fill="#fff" font-weight="bold" font-style="normal" font-family="Liberation Sans" text-anchor="start" textLength="124.4" lengthAdjust="spacingAndGlyphs" >Наталія Крайчин...</text>
<text xml:space="preserve" x="869.5" y="428.9" font-size="13.5" fill="#fff" font-weight="bold" font-style="normal" font-family="Liberation Sans" text-anchor="start" textLength="98.5" lengthAdjust="spacingAndGlyphs" >Ганна Братиця</text>
<text xml:space="preserve" x="1072" y="409" font-size="14" fill="#fff" font-weight="normal" font-style="normal" font-family="Liberation Sans" text-anchor="start" textLength="64" lengthAdjust="spacingAndGlyphs" stroke="#fff" stroke-width="0.45">Ще 5 осіб</text>
<text xml:space="preserve" x="1210" y="426.5" font-size="13.5" fill="#fff" font-weight="bold" font-style="normal" font-family="Liberation Sans" text-anchor="start" textLength="17" lengthAdjust="spacingAndGlyphs" >Ви</text>
<text xml:space="preserve" x="24.2" y="522" font-size="15.5" fill="#fff" font-weight="normal" font-style="normal" font-family="Liberation Sans" text-anchor="start" textLength="34.9" lengthAdjust="spacingAndGlyphs" stroke="#fff" stroke-width="0.55">15:13</text>
<rect x="71.8" y="509.7" width="1" height="15" fill="#9aa0a6" rx="0" />
<text xml:space="preserve" x="85.5" y="522" font-size="15.5" fill="#fff" font-weight="normal" font-style="normal" font-family="Liberation Sans" text-anchor="start" textLength="350" lengthAdjust="spacingAndGlyphs" stroke="#fff" stroke-width="0.55">Методична майстерня вчителя іноземних м...</text>
<circle cx="542" cy="517" r="20" fill="#ea4335"/>
<circle cx="594" cy="517" r="20" fill="#3c4043"/>
<circle cx="646" cy="517" r="20" fill="#3c4043"/>
<circle cx="698" cy="517" r="20" fill="#3c4043"/>
<circle cx="750" cy="517" r="20" fill="#3c4043"/>
<rect x="782" y="497" width="56" height="40" fill="#ea4335" rx="20" />
<g fill="none" stroke="#fff" stroke-width="1.6" stroke-linecap="round"><path d="M539.5 516 V511.5 Q539.5 509 542 509 Q544.5 509 544.5 511.5 V516 Z" fill="#fff" stroke-width="0.6"/><path d="M537 517.5 Q537.5 522 542 522 Q546.5 522 547 517.5"/><line x1="542" y1="522" x2="542" y2="525"/><line x1="535.5" y1="509.5" x2="548.5" y2="524" stroke="#ea4335" stroke-width="3"/><line x1="535.5" y1="509.5" x2="548.5" y2="524"/></g>
<g fill="none" stroke="#fff" stroke-width="2"><rect x="586.6" y="511" width="11.6" height="11.6" rx="1.2"/></g><path d="M598 515 L603 511.5 V522.5 L598 519 Z" fill="#fff"/>
<path d="M641.6 520 V509.6 A1.95 1.95 0 0 1 645.5 509.6 V516.5 M645.5 509.6 V507.1 A1.65 1.65 0 0 1 648.8 507.1 V516.5 M648.8 507.1 V509.6 A1.5 1.5 0 0 1 651.8 509.6 V516.5 M651.8 509.8 V511.8 A1.4 1.4 0 0 1 654.6 511.8 V520.5 Q654.6 528.7 646.8 528.7 Q642.3 528.7 639.8 525.2 L636.8 519.5 Q636 517.3 637.6 516.6 Q639.3 516 641.6 520" fill="none" stroke="#fff" stroke-width="1.8" stroke-linejoin="round"/>
<rect x="688.2" y="509.2" width="20" height="15.2" rx="0.8" fill="none" stroke="#fff" stroke-width="2.5"/><path d="M698.2 512.8 L702.5 517.3 H700 V520.9 H696.4 V517.3 H693.9 Z" fill="#fff"/>
<circle cx="750" cy="511.1" r="2.4" fill="#fff"/>
<circle cx="750" cy="517" r="2.4" fill="#fff"/>
<circle cx="750" cy="523.1" r="2.4" fill="#fff"/>
<path d="M797.6 516.3 Q810 506.5 822.4 516.3 L819.6 520.8 L814.6 518.6 L815 515.8 Q810 512.2 805 515.8 L805.4 518.6 L800.4 520.8 Z" fill="#fff" stroke="#fff" stroke-width="0.6" stroke-linejoin="round"/>
<circle cx="1132.2" cy="516.7" r="9.6" fill="none" stroke="#fff" stroke-width="2.2"/>
<rect x="1130.9" y="515.6" width="2.7" height="6" fill="#fff" rx="0" />
<circle cx="1132.25" cy="512.6" r="1.5" fill="#fff"/>
<circle cx="1177.1" cy="513" r="3.4" fill="none" stroke="#fff" stroke-width="2.8"/>
<path d="M1169.8 524.2 Q1169.8 518.3 1177.1 518.3 Q1184.4 518.3 1184.4 524.2 Z" fill="none" stroke="#fff" stroke-width="2.4" stroke-linejoin="round"/>
<path d="M1181.8 509.3 Q1187.8 509.3 1187.8 513 Q1187.8 516.8 1181.8 516.8 Q1183.8 513 1181.8 509.3 Z" fill="#fff"/>
<path d="M1185.3 518.8 Q1192 519.5 1192 525.3 H1186.2 Q1186.8 521.5 1185.3 518.8 Z" fill="#fff"/>
<circle cx="1190.9" cy="498" r="10" fill="#5f6368"/>
<text xml:space="preserve" x="1185.2" y="501.9" font-size="10.5" fill="#fff" font-weight="bold" font-style="normal" font-family="Liberation Sans" text-anchor="start" textLength="11.5" lengthAdjust="spacingAndGlyphs" >14</text>
<path d="M1218.7 508.1 H1237.7 V521.9 H1222.5 L1218.7 525.5 Z" fill="none" stroke="#fff" stroke-width="2.1" stroke-linejoin="miter"/>
<rect x="1221.8" y="510.8" width="12.6" height="1.9" fill="#fff" rx="0" />
<rect x="1221.8" y="514" width="12.6" height="1.9" fill="#fff" rx="0" />
<rect x="1221.8" y="517.1" width="9.2" height="1.9" fill="#fff" rx="0" />
<path d="M1276.3 507 L1282 515.6 H1270.5 Z" fill="#fff"/><path d="M1276.3 511.6 L1277.6 513.5 H1275 Z" fill="#202124"/>
<rect x="1266.6" y="518.2" width="9" height="8.6" fill="#fff" rx="0" />
<rect x="1270" y="521.3" width="2.3" height="2.4" fill="#202124" rx="0" />
<circle cx="1281.9" cy="522.5" r="3.3" fill="none" stroke="#fff" stroke-width="2.8"/>
<path d="M1324 506.9 L1332.3 510.2 V516.8 Q1332.3 523.8 1324 527.1 Q1315.7 523.8 1315.7 516.8 V510.2 Z" fill="none" stroke="#fff" stroke-width="1.7" stroke-linejoin="round"/>
<rect x="1319.9" y="514.8" width="8" height="7.1" fill="#fff" rx="0.6" />
<circle cx="1323.9" cy="518.3" r="0.9" fill="#202124"/>
<path d="M1321.3 515 V513.8 Q1321.3 511.5 1323.9 511.5 Q1326.5 511.5 1326.5 513.8 V515" fill="none" stroke="#fff" stroke-width="1.5"/>
</svg>
</body></html>
